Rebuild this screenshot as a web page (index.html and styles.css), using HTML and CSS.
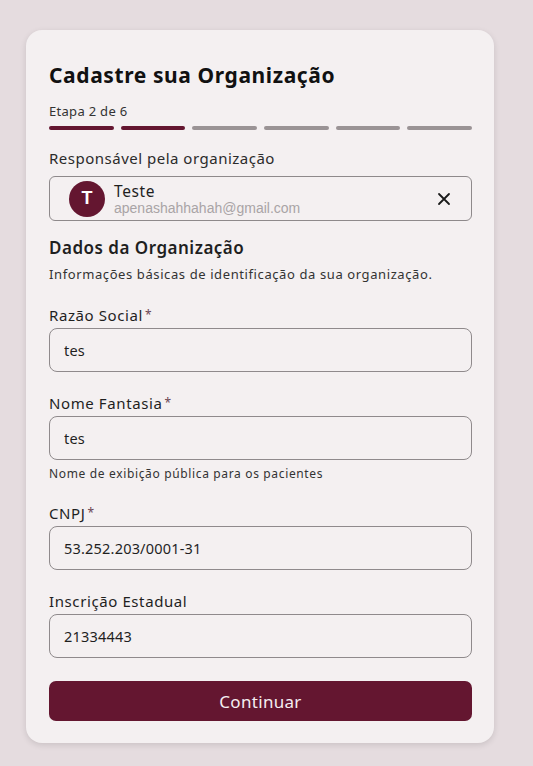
FILE: index.html
```html
<!DOCTYPE html>
<html lang="pt-BR">
  <head>
    <meta charset="utf-8" />
    <title>Cadastre sua Organização</title>
    <link rel="stylesheet" href="styles.css">
  </head>
  <body>
    <div class="card">
      <h1>Cadastre sua Organização</h1>

      <div class="step-label">Etapa 2 de 6</div>
      <div class="steps">
        <span class="step done"></span>
        <span class="step done"></span>
        <span class="step"></span>
        <span class="step"></span>
        <span class="step"></span>
        <span class="step"></span>
      </div>

      <div class="owner-label">Responsável pela organização</div>
      <div class="owner">
        <div class="avatar">T</div>
        <div class="owner-info">
          <div class="owner-name">Teste</div>
          <div class="owner-email">apenashahhahah@gmail.com</div>
        </div>
        <button class="owner-clear" type="button" aria-label="Remover">
          <svg width="14" height="14" viewBox="0 0 14 14">
            <path d="M2 2 L12 12 M12 2 L2 12" stroke="#1a1a1a" stroke-width="1.8" stroke-linecap="round" />
          </svg>
        </button>
      </div>

      <h2>Dados da Organização</h2>
      <p class="section-desc">Informações básicas de identificação da sua organização.</p>

      <div class="field">
        <label>Razão Social<span class="req">*</span></label>
        <input type="text" value="tes" />
      </div>

      <div class="field">
        <label>Nome Fantasia<span class="req">*</span></label>
        <input type="text" value="tes" />
        <small>Nome de exibição pública para os pacientes</small>
      </div>

      <div class="field">
        <label>CNPJ<span class="req">*</span></label>
        <input type="text" value="53.252.203/0001-31" />
      </div>

      <div class="field">
        <label>Inscrição Estadual</label>
        <input type="text" value="21334443" />
      </div>

      <button class="submit" type="button">Continuar</button>
    </div>
  </body>
</html>
```

FILE: styles.css
```css
body {
  margin: 0;
  padding: 30px 0 0 26px;
  min-height: 766px;
  box-sizing: border-box;
  font-family: "Noto Sans", "Open Sans", sans-serif;
  letter-spacing: 0.2px;
  background-color: #e5dcdf;
  color: #1f1f1f;
}
.card {
  width: 468px;
  box-sizing: border-box;
  padding: 30px 22px 22px 23px;
  background-color: #f4f0f1;
  border-radius: 16px;
  box-shadow: 0 2px 6px rgba(0, 0, 0, 0.12);
}
h1 {
  margin: 0;
  font-size: 21px;
  font-weight: 700;
  line-height: 30px;
  letter-spacing: 0.6px;
  color: #111;
}
.step-label {
  margin-top: 12px;
  font-size: 13px;
  line-height: 18px;
  letter-spacing: 0.3px;
  color: #333;
}
.steps {
  display: flex;
  gap: 7px;
  margin-top: 6px;
}
.step {
  flex: 1;
  height: 4px;
  border-radius: 2px;
  background-color: #9a9395;
}
.step.done {
  background-color: #641630;
}
.owner-label {
  margin-top: 18px;
  font-size: 15px;
  line-height: 20px;
  letter-spacing: 0.5px;
  color: #2b2b2b;
}
.owner {
  display: flex;
  align-items: center;
  height: 45px;
  box-sizing: border-box;
  margin-top: 8px;
  padding: 0 20px 0 19px;
  border: 1px solid #8e898b;
  border-radius: 6px;
}
.avatar {
  width: 36px;
  height: 36px;
  border-radius: 50%;
  background-color: #641630;
  color: #fff;
  font-family: "Liberation Sans", Arial, sans-serif;
  font-size: 18px;
  font-weight: 700;
  letter-spacing: 0;
  display: flex;
  align-items: center;
  justify-content: center;
}
.owner-info {
  flex: 1;
  margin-left: 9px;
}
.owner-name {
  font-size: 15.5px;
  line-height: 18px;
  letter-spacing: 0.6px;
  color: #1f1f1f;
}
.owner-email {
  font-family: "Liberation Sans", Arial, sans-serif;
  font-size: 14px;
  line-height: 16px;
  letter-spacing: 0;
  color: #a9a4a6;
}
.owner-clear {
  border: none;
  background: none;
  padding: 0;
  width: 14px;
  height: 14px;
  cursor: pointer;
  display: flex;
}
h2 {
  margin: 15px 0 0;
  font-size: 17px;
  font-weight: 600;
  line-height: 24px;
  letter-spacing: 0.5px;
  color: #1f1f1f;
}
.section-desc {
  margin: 5px 0 0;
  font-size: 13px;
  line-height: 18px;
  letter-spacing: 0.6px;
  color: #333;
}
.field {
  margin-top: 22px;
}
.field + .field {
  margin-top: 21px;
}
label {
  display: block;
  font-size: 15px;
  line-height: 20px;
  letter-spacing: 0.6px;
  color: #1f1f1f;
}
.req {
  margin-left: 2px;
  font-size: 12px;
  letter-spacing: 0;
  color: #6b4452;
  vertical-align: top;
}
input[type="text"] {
  display: block;
  width: 100%;
  height: 44px;
  box-sizing: border-box;
  margin-top: 3px;
  padding: 0 14px;
  border: 1px solid #8f8a8c;
  border-radius: 8px;
  background: transparent;
  font-family: inherit;
  font-size: 14.5px;
  letter-spacing: 0.2px;
  color: #1f1f1f;
}
input[type="text"]:focus {
  outline: none;
  border-color: #641630;
}
small {
  display: block;
  margin-top: 6px;
  font-size: 12px;
  line-height: 16px;
  letter-spacing: 0.65px;
  color: #333;
}
.submit {
  display: block;
  width: 100%;
  height: 40px;
  margin-top: 23px;
  border: none;
  border-radius: 7px;
  background-color: #641630;
  color: #f5eef1;
  font-family: inherit;
  font-size: 17px;
  letter-spacing: 0.3px;
  cursor: pointer;
}
.submit:hover {
  background-color: #531127;
}
```
